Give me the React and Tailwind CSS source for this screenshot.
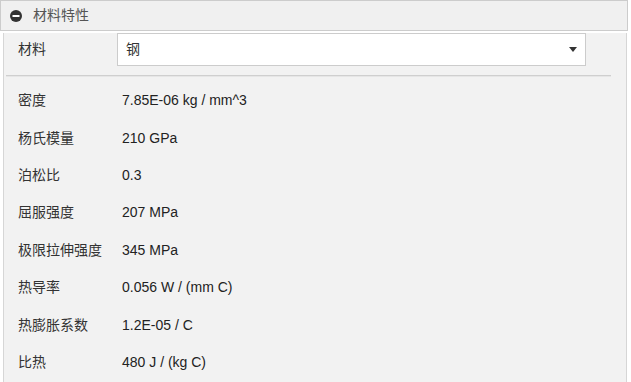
const props = [
  ['密度', '7.85E-06 kg / mm^3'],
  ['杨氏模量', '210 GPa'],
  ['泊松比', '0.3'],
  ['屈服强度', '207 MPa'],
  ['极限拉伸强度', '345 MPa'],
  ['热导率', '0.056 W / (mm C)'],
  ['热膨胀系数', '1.2E-05 / C'],
  ['比热', '480 J / (kg C)'],
];

export default function App() {
  return (
    <div className="w-[631px] h-[382px] bg-white overflow-hidden" style={{ fontFamily: '"Liberation Sans", "Noto Sans CJK SC", sans-serif' }}>
      <div className="w-[628px] h-[31px] border border-[#cccccc] bg-[#f0f0f0] flex items-center pl-[9px]">
        <svg width="12" height="12" viewBox="0 0 12 12">
          <circle cx="6" cy="6" r="6" fill="#333" />
          <rect x="2.5" y="5" width="7" height="2" fill="#fff" />
        </svg>
        <span className="ml-[11px] text-[14px] text-[#555]">材料特性</span>
      </div>
      <div className="ml-[3px] w-[624px] h-[351px] border-x border-[#d6d6d6] bg-[#f2f2f2]">
        <div className="flex items-center h-[33px] mt-[2px] pl-[14px] pr-[40px]">
          <span className="w-[99px] text-[14px] text-[#333]">材料</span>
          <div className="flex-1 h-[33px] bg-white border border-[#cccccc] flex items-center px-[8px]">
            <span className="flex-1 text-[14px] text-[#333]">钢</span>
            <svg width="8" height="6" viewBox="0 0 8 6"><path d="M0 0 H8 L4 5 Z" fill="#333" /></svg>
          </div>
        </div>
        <div className="mt-[9px] ml-[2px] w-[605px] h-[2px] bg-[#cfcfcf] border-b border-[#e6e6e6]" />
        <div className="pt-[5px]">
          {props.map(([k, v]) => (
            <div key={k} className="flex items-center h-[37.4px] pl-[14px]">
              <span className="w-[104px] text-[14px] text-[#333]">{k}</span>
              <span className="text-[14px] text-[#222]">{v}</span>
            </div>
          ))}
        </div>
      </div>
    </div>
  );
}
